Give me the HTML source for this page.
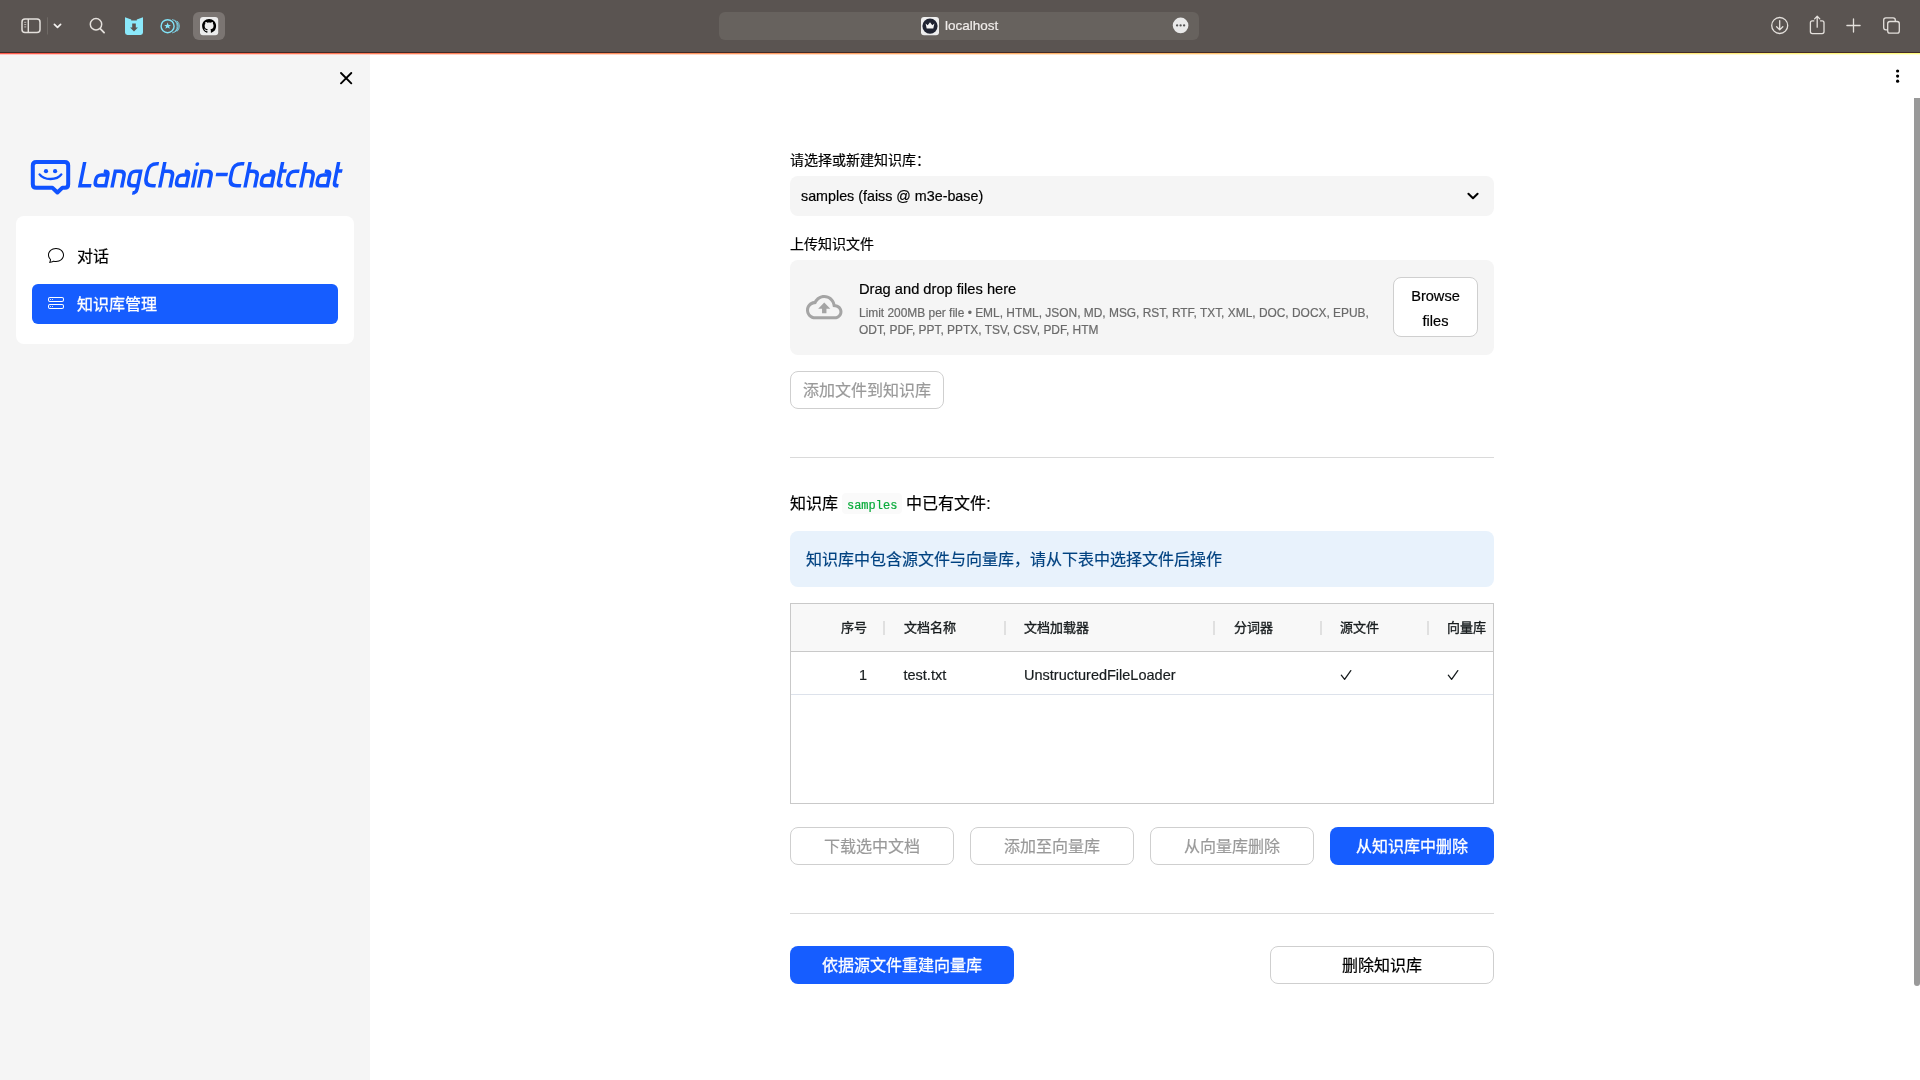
<!DOCTYPE html>
<html lang="zh-CN"><head><meta charset="utf-8">
<style>
*{box-sizing:border-box;margin:0;padding:0}
html,body{width:1920px;height:1080px;overflow:hidden;background:#fff;-webkit-font-smoothing:antialiased;-webkit-text-stroke:0.2px currentColor;font-family:"Liberation Sans",sans-serif;color:#000}
.abs{position:absolute}
#tb{position:absolute;left:0;top:0;width:1920px;height:52px;background:#5a5451}
#tbline{position:absolute;left:0;top:52px;width:1920px;height:1px;background:#432b28}
#deco{position:absolute;left:0;top:53px;width:1920px;height:1px;background:linear-gradient(90deg,#ff5a4b,#fffd80)}
#deco2{position:absolute;left:0;top:54px;width:1920px;height:1px;background:linear-gradient(90deg,#ff5a4b,#fffd80);opacity:.35}
#addr{position:absolute;left:719px;top:12px;width:480px;height:28px;border-radius:6px;background:#67625e}
#side{position:absolute;left:0;top:55px;width:370px;height:1025px;background:#f5f5f5}
.card{position:absolute;left:16px;top:216px;width:338px;height:128px;background:#fff;border-radius:8px}
.nav{position:absolute;left:32px;width:306px;height:40px;border-radius:6px;font-size:16px;line-height:40px}
.nav .t{position:absolute;left:45px;top:1px}
.btn{position:absolute;border:1px solid #cfcfcf;border-radius:8px;background:#fff;text-align:center;font-size:16px;color:#9a9a9a;padding-top:1px}
.pbtn{position:absolute;border-radius:8px;background:#165dff;text-align:center;font-size:16px;color:#fff;font-weight:400;-webkit-text-stroke:0.3px #fff}
.hr{position:absolute;left:790px;width:704px;height:1px;background:#dadada}
.th{position:absolute;top:603px;font-size:13px;font-weight:400;-webkit-text-stroke:0.35px #181d1f;color:#181d1f;line-height:49px}
.sep{position:absolute;top:621px;width:2px;height:14px;background:#e0e0e0}
.td{position:absolute;top:655px;font-size:14.5px;color:#181d1f;line-height:41px}
</style></head><body><div style="position:absolute;left:0;top:0;width:1920px;height:1080px;will-change:transform">
<div id="tb"></div>
<div id="tbline"></div>
<div id="deco"></div><div id="deco2"></div>
<svg class="abs" style="left:0;top:0" width="1920" height="100" viewBox="0 0 1920 100">
<rect x="22" y="19" width="18" height="13.4" rx="3" fill="none" stroke="#e4e0dc" stroke-width="1.5"/>
<path d="M28.3 19V32.4" stroke="#e4e0dc" stroke-width="1.4"/>
<path d="M24.2 22.3H26.2M24.2 24.6H26.2M24.2 26.9H26.2" stroke="#e4e0dc" stroke-width="0.9" opacity="0.8"/>
<path d="M47.5 17.3V34.5" stroke="#6e6965" stroke-width="1"/>
<path d="M54.4 24.4L57.5 27.4L60.6 24.4" fill="none" stroke="#f4f2f0" stroke-width="1.7" stroke-linecap="round" stroke-linejoin="round"/>
<circle cx="96" cy="24.3" r="5.7" fill="none" stroke="#e4e0dc" stroke-width="1.5"/>
<path d="M100.2 28.6L104.1 32.6" stroke="#e4e0dc" stroke-width="1.8" stroke-linecap="round"/>
<path d="M125 17.2L131.2 19.6V20.6H136.8V19.6L143 17.2V32.6Q143 35 140.6 35H127.4Q125 35 125 32.6Z" fill="#8be9fb"/>
<path d="M132.2 23.6H135.8V27.4H137.9L134 31.4L130.1 27.4H132.2Z" fill="#5a5451"/>
<circle cx="167.6" cy="26.2" r="6.5" fill="none" stroke="#82e3f7" stroke-width="1.4"/>
<path d="M167.6 22.6L168.6 24.9L171 25L169.1 26.5L169.8 28.8L167.6 27.5L165.4 28.8L166.1 26.5L164.2 25L166.6 24.9Z" fill="#82e3f7"/>
<path d="M172.2 19.5A7 7 0 0 1 172.2 32.9M174.6 20.1A7 7 0 0 1 174.6 32.3M176.9 20.9A7 7 0 0 1 176.9 31.5" fill="none" stroke="#7fd8ee" stroke-width="0.9"/>
<rect x="193" y="12" width="32" height="28" rx="6" fill="#7b7572"/>
<rect x="200" y="17" width="18.2" height="18.3" rx="3" fill="#ececec"/>
<g transform="translate(202.1 19.1) scale(0.875)"><path fill="#000" d="M8 0C3.58 0 0 3.58 0 8c0 3.54 2.29 6.53 5.47 7.59.4.07.55-.17.55-.38 0-.19-.01-.82-.01-1.49-2.01.37-2.53-.49-2.69-.94-.09-.23-.48-.94-.82-1.13-.28-.15-.68-.52-.01-.53.63-.01 1.08.58 1.23.82.72 1.21 1.87.87 2.33.66.07-.52.28-.87.51-1.07-1.78-.2-3.64-.89-3.640-3.950 0-.87.31-1.590.82-2.150-.08-.2-.36-1.02.08-2.12 0 0 .67-.21 2.2.82.64-.18 1.32-.27 2-.27.68 0 1.36.09 2 .27 1.53-1.04 2.2-.82 2.2-.82.44 1.1.16 1.92.08 2.12.51.56.82 1.27.82 2.15 0 3.07-1.87 3.75-3.65 3.95.29.25.54.73.54 1.48 0 1.07-.01 1.93-.01 2.2 0 .21.15.46.55.38A8.013 8.013 0 0016 8c0-4.42-3.58-8-8-8z"/></g>
<rect x="719" y="12" width="480" height="28" rx="6" fill="#67625e"/>
<rect x="921" y="17" width="18" height="18.2" rx="3" fill="#eeeeee"/>
<circle cx="930" cy="26.1" r="7.6" fill="#1f2331"/>
<path d="M925.6 23.4L927.7 25.3L930 22.3L932.3 25.3L934.4 23.4L933.3 28.6H926.7Z" fill="#f4f4f4"/>
<circle cx="1180.6" cy="25.4" r="7.8" fill="#e9e9e9"/>
<circle cx="1177.1" cy="25.4" r="1.15" fill="#555"/><circle cx="1180.6" cy="25.4" r="1.15" fill="#555"/><circle cx="1184.1" cy="25.4" r="1.15" fill="#555"/>
<circle cx="1779.7" cy="25.5" r="8" fill="none" stroke="#e4e0dc" stroke-width="1.3"/>
<path d="M1779.7 20.6V29.8M1776.6 26.8L1779.7 29.9L1782.8 26.8" fill="none" stroke="#e4e0dc" stroke-width="1.3" stroke-linecap="round" stroke-linejoin="round"/>
<path d="M1814.3 20.8H1812.3Q1810.4 20.8 1810.4 22.7V31.8Q1810.4 33.6 1812.3 33.6H1822.1Q1824 33.6 1824 31.8V22.7Q1824 20.8 1822.1 20.8H1820.1" fill="none" stroke="#e4e0dc" stroke-width="1.3"/>
<path d="M1817.2 27.2V16.4M1814.6 18.9L1817.2 16.2L1819.8 18.9" fill="none" stroke="#e4e0dc" stroke-width="1.3" stroke-linecap="round" stroke-linejoin="round"/>
<path d="M1846.9 25.5H1860.1M1853.5 18.9V32.1" stroke="#e4e0dc" stroke-width="1.3" stroke-linecap="round"/>
<rect x="1883.7" y="17.9" width="11.6" height="11.9" rx="2.2" fill="none" stroke="#e4e0dc" stroke-width="1.3"/>
<rect x="1887.7" y="21.5" width="11.6" height="11.6" rx="2.2" fill="#5a5451" stroke="#e4e0dc" stroke-width="1.3"/>
<circle cx="1897.6" cy="71" r="1.6" fill="#000"/><circle cx="1897.6" cy="76.1" r="1.6" fill="#000"/><circle cx="1897.6" cy="81.2" r="1.6" fill="#000"/>
</svg>
<div class="abs" style="left:945px;top:17px;font-size:13.5px;color:#f0ecea;line-height:18px">localhost</div>

<div id="side">
</div>
<div class="card">
</div>
<div class="nav" style="top:236px;color:#000"><span class="t">对话</span></div>
<div class="nav" style="top:284px;background:#165dff;color:#fff;-webkit-text-stroke:0.3px #fff"><span class="t">知识库管理</span></div>

<svg class="abs" style="left:0;top:0" width="370" height="360" viewBox="0 0 370 360">
<path d="M341 73L351.3 83.3M351.3 73L341 83.3" stroke="#000" stroke-width="1.9" stroke-linecap="round"/>
<path d="M36.3 162H64.7Q68.2 162 68.2 165.5V184.15Q68.2 187.65 64.7 187.65H62.5L57.4 192.5L52.3 187.65H36.3Q32.8 187.65 32.8 184.15V165.5Q32.8 162 36.3 162Z" fill="none" stroke="#1052ff" stroke-width="4" stroke-linejoin="round"/>
<circle cx="46" cy="171.2" r="2.1" fill="#1052ff"/><circle cx="55.1" cy="171.2" r="2.1" fill="#1052ff"/>
<path d="M39.6 174.4C44 180.6 57 180.6 61.3 174.4" fill="none" stroke="#1052ff" stroke-width="2.4" stroke-linecap="round"/>
<g transform="translate(0 187.6) skewX(-11.3) translate(0 -187.6)">
<path d="M 79.6 162 V 185.85 H 90.9 M 105.35 187.6 V 175.35 Q 105.35 171.15 101.15 171.15 H 100.5 M 105.35 174.9 H 98.8 Q 94.2 174.9 94.2 179.5 V 181.65 Q 94.2 185.85 98.4 185.85 H 105.35 M 112 187.6 V 171.15 H 116.65 Q 121.65 171.15 121.65 176.15 V 187.6 M 139.1 171.15 H 132.4 Q 127.6 171.15 127.6 175.95 V 181.05 Q 127.6 185.85 132.4 185.85 H 137.35 M 137.35 171.15 V 188.95 Q 137.35 192.95 133.35 192.95 H 133.8 M 154 163.75 H 152.25 Q 144.25 163.75 144.25 171.75 V 177.85 Q 144.25 185.85 152.25 185.85 H 155.3 M 159.75 162 V 187.6 M 159.75 171.15 H 165.1 Q 170.1 171.15 170.1 176.15 V 187.6 M 186 187.6 V 175.35 Q 186 171.15 181.8 171.15 H 181.5 M 186 174.9 H 180.1 Q 175.5 174.9 175.5 179.5 V 181.65 Q 175.5 185.85 179.7 185.85 H 186 M 192.5 169.4 V 187.6 M 198.7 187.6 V 171.15 H 203.7 Q 208.7 171.15 208.7 176.15 V 187.6 M 213.3 174.45 H 225.1 M 239.5 163.75 H 236.65 Q 228.65 163.75 228.65 171.75 V 177.85 Q 228.65 185.85 236.65 185.85 H 240.7 M 245 162 V 187.6 M 245 171.15 H 249.75 Q 254.75 171.15 254.75 176.15 V 187.6 M 271.25 187.6 V 175.35 Q 271.25 171.15 267.05 171.15 H 266.5 M 271.25 174.9 H 264.95 Q 260.35 174.9 260.35 179.5 V 181.65 Q 260.35 185.85 264.55 185.85 H 271.25 M 277.55 162 V 182.25 Q 277.55 185.85 281.15 185.85 H 282.2 M 277.55 171 H 283.2 M 296.1 171.15 H 292.15 Q 286.15 171.15 286.15 177.15 V 179.85 Q 286.15 185.85 292.15 185.85 H 295.8 M 300.75 162 V 187.6 M 300.75 171.15 H 305.7 Q 310.7 171.15 310.7 176.15 V 187.6 M 327.05 187.6 V 175.35 Q 327.05 171.15 322.85 171.15 H 321.5 M 327.05 174.9 H 320.75 Q 316.15 174.9 316.15 179.5 V 181.65 Q 316.15 185.85 320.35 185.85 H 327.05 M 333.55 162 V 182.25 Q 333.55 185.85 337.15 185.85 H 338.05 M 333.55 171 H 339" fill="none" stroke="#1052ff" stroke-width="3.5" stroke-linejoin="miter"/>
<circle cx="192.6" cy="164.1" r="1.9" fill="#1052ff"/>
</g>
<g transform="translate(48 247)"><path fill="#000" d="M2.678 11.894a1 1 0 0 1 .287.801 10.97 10.97 0 0 1-.398 2c1.395-.323 2.247-.697 2.634-.893a1 1 0 0 1 .71-.074A8.06 8.06 0 0 0 8 14c3.996 0 7-2.807 7-6 0-3.192-3.004-6-7-6S1 4.808 1 8c0 1.468.617 2.83 1.678 3.894zm-.493 3.905a21.682 21.682 0 0 1-.713.129c-.2.032-.352-.176-.273-.362a9.68 9.68 0 0 0 .244-.637l.003-.01c.248-.72.45-1.548.524-2.319C.743 11.37 0 9.76 0 8c0-3.866 3.582-7 8-7s8 3.134 8 7-3.582 7-8 7a9.06 9.06 0 0 1-2.347-.306c-.52.263-1.639.742-3.468 1.105z"/></g>
<g transform="translate(48 295)" fill="#fff"><path d="M14 10a1 1 0 0 1 1 1v1a1 1 0 0 1-1 1H2a1 1 0 0 1-1-1v-1a1 1 0 0 1 1-1h12zM2 9a2 2 0 0 0-2 2v1a2 2 0 0 0 2 2h12a2 2 0 0 0 2-2v-1a2 2 0 0 0-2-2H2z"/><path d="M5 11.5a.5.5 0 1 1-1 0 .5.5 0 0 1 1 0zm-2 0a.5.5 0 1 1-1 0 .5.5 0 0 1 1 0zM14 3a1 1 0 0 1 1 1v1a1 1 0 0 1-1 1H2a1 1 0 0 1-1-1V4a1 1 0 0 1 1-1h12zM2 2a2 2 0 0 0-2 2v1a2 2 0 0 0 2 2h12a2 2 0 0 0 2-2V4a2 2 0 0 0-2-2H2z"/><path d="M5 4.5a.5.5 0 1 1-1 0 .5.5 0 0 1 1 0zm-2 0a.5.5 0 1 1-1 0 .5.5 0 0 1 1 0z"/></g>
</svg>
<!-- main -->
<div class="abs" style="left:790px;top:150px;font-size:14px;line-height:20px">请选择或新建知识库：</div>
<div class="abs" style="left:790px;top:176px;width:704px;height:40px;border-radius:8px;background:#f5f5f5"></div>
<div class="abs" style="left:801px;top:186px;font-size:14.3px;line-height:20px">samples (faiss @ m3e-base)</div>

<div class="abs" style="left:790px;top:234px;font-size:14px;line-height:20px">上传知识文件</div>
<div class="abs" style="left:790px;top:260px;width:704px;height:95px;border-radius:8px;background:#f5f5f5"></div>
<div class="abs" style="left:859px;top:279px;font-size:14.67px;line-height:20px">Drag and drop files here</div>
<div class="abs" style="left:859px;top:305px;font-size:11.93px;line-height:17px;color:#6a6a6a">Limit 200MB per file • EML, HTML, JSON, MD, MSG, RST, RTF, TXT, XML, DOC, DOCX, EPUB,<br>ODT, PDF, PPT, PPTX, TSV, CSV, PDF, HTM</div>
<div class="btn" style="left:1393px;top:277px;width:85px;height:60px;color:#000;font-size:14.6px;line-height:25px;padding-top:5.5px">Browse<br>files</div>

<svg class="abs" style="left:780px;top:170px" width="720" height="160" viewBox="780 170 720 160">
<path d="M1468.4 193.7L1473 198.3L1477.6 193.7" fill="none" stroke="#000" stroke-width="2" stroke-linecap="round" stroke-linejoin="round"/>
<g transform="translate(806 288.9) scale(1.52)"><path fill="#a5a5a5" d="M19.35 10.04C18.67 6.59 15.64 4 12 4 9.11 4 6.6 5.640 5.35 8.04 2.34 8.36 0 10.91 0 14c0 3.31 2.69 6 6 6h13c2.76 0 5-2.24 5-5 0-2.64-2.05-4.78-4.65-4.96zM19 18H6c-2.21 0-4-1.79-4-4 0-2.05 1.53-3.76 3.56-3.97l1.07-.11.5-.95C8.08 7.14 9.94 6 12 6c2.62 0 4.88 1.86 5.39 4.43l.3 1.5 1.53.11c1.56.1 2.78 1.410 2.78 2.96 0 1.65-1.35 3-3 3zM8 13h2.55v3h2.9v-3H16l-4-4z"/></g>
</svg>
<div class="btn" style="left:790px;top:371px;width:154px;height:38px;line-height:36px">添加文件到知识库</div>

<div class="hr" style="top:457px"></div>

<div class="abs" style="left:790px;top:493px;font-size:16px;line-height:22px">知识库 <span style="font-family:'Liberation Mono',monospace;font-size:12px;color:#09ab3b;background:#fafafa;border-radius:4px;padding:6px 4.5px 0.5px">samples</span> 中已有文件:</div>

<div class="abs" style="left:790px;top:531px;width:704px;height:56px;border-radius:8px;background:#e8f2fc"></div>
<div class="abs" style="left:806px;top:549px;font-size:16px;line-height:22px;color:#004280">知识库中包含源文件与向量库，请从下表中选择文件后操作</div>

<!-- table -->
<div class="abs" style="left:790px;top:603px;width:704px;height:201px;border:1px solid #c9c9c9;background:#fff"></div>
<div class="abs" style="left:791px;top:604px;width:702px;height:48px;background:#f8f8f8;border-bottom:1px solid #c9c9c9"></div>
<div class="abs" style="left:791px;top:694px;width:702px;height:1px;background:#dde2eb"></div>

<div class="th" style="left:800px;width:66.5px;text-align:right">序号</div>
<div class="sep" style="left:883px"></div>
<div class="th" style="left:903.5px">文档名称</div>
<div class="sep" style="left:1004px"></div>
<div class="th" style="left:1024px">文档加载器</div>
<div class="sep" style="left:1213px"></div>
<div class="th" style="left:1233.5px">分词器</div>
<div class="sep" style="left:1320px"></div>
<div class="th" style="left:1340px">源文件</div>
<div class="sep" style="left:1427px"></div>
<div class="th" style="left:1447px">向量库</div>
<div class="td" style="left:800px;width:67px;text-align:right">1</div>
<div class="td" style="left:903.5px">test.txt</div>
<div class="td" style="left:1024px">UnstructuredFileLoader</div>
<svg class="abs" style="left:1330px;top:660px" width="140" height="30" viewBox="1330 660 140 30"><path d="M1341.3 675.2L1344.6 679.3L1350.8 670.6M1448.3 675.2L1451.6 679.3L1457.8 670.6" fill="none" stroke="#181d1f" stroke-width="1.3" stroke-linecap="round" stroke-linejoin="round"/></svg>
<div class="btn" style="left:790px;top:827px;width:164px;height:38px;line-height:36px">下载选中文档</div>
<div class="btn" style="left:970px;top:827px;width:164px;height:38px;line-height:36px">添加至向量库</div>
<div class="btn" style="left:1150px;top:827px;width:164px;height:38px;line-height:36px">从向量库删除</div>
<div class="pbtn" style="left:1330px;top:827px;width:164px;height:38px;line-height:39px">从知识库中删除</div>

<div class="hr" style="top:913px"></div>
<div class="pbtn" style="left:790px;top:946px;width:224px;height:38px;line-height:39px">依据源文件重建向量库</div>
<div class="btn" style="left:1270px;top:946px;width:224px;height:38px;line-height:36px;padding-top:1px;color:#000">删除知识库</div>

<!-- scrollbar -->
<div class="abs" style="left:1914px;top:98px;width:6px;height:888px;border-radius:0 0 3px 3px;background:#999"></div>
</div></body></html>
